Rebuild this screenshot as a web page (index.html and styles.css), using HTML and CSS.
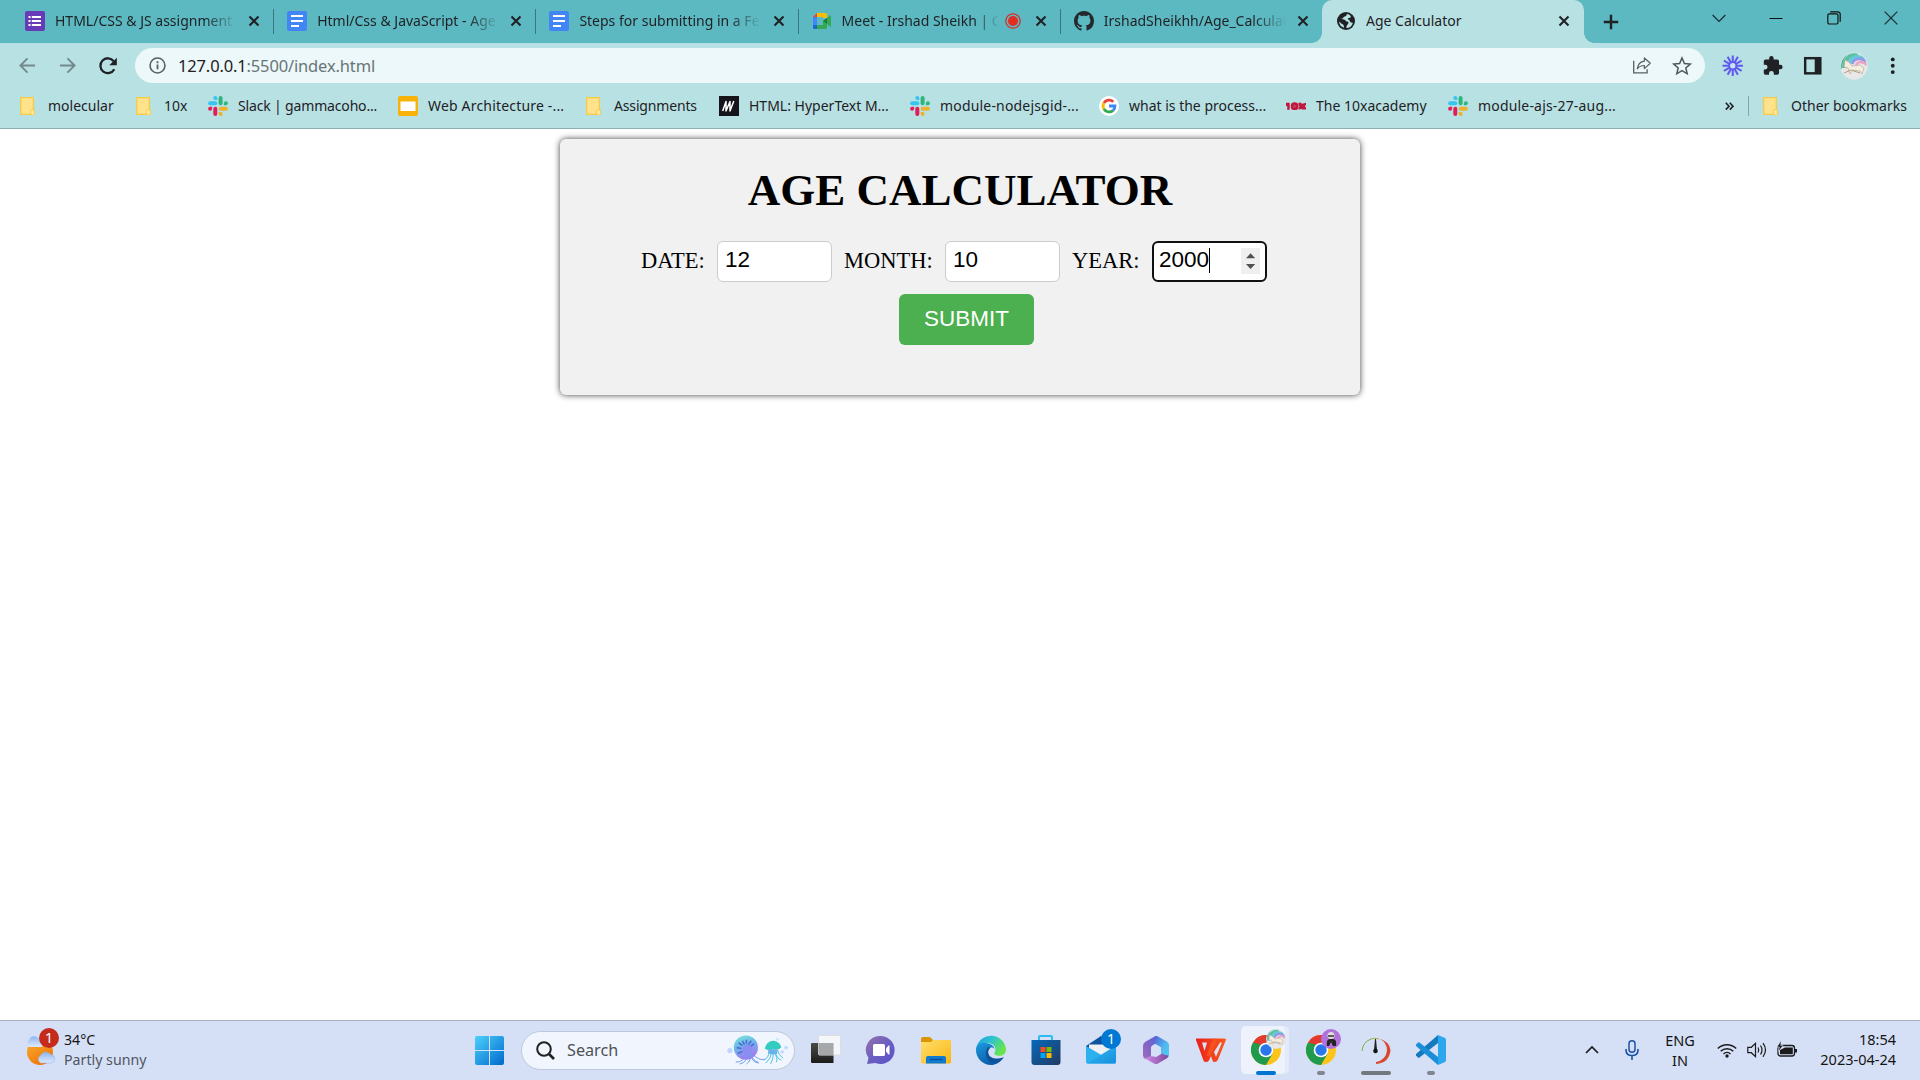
FILE: index.html
```html
<!DOCTYPE html>
<html lang="en">
<head>
<meta charset="utf-8">
<title>Age Calculator</title>
<link rel="stylesheet" href="styles.css">
</head>
<body>
<svg class="defs" width="0" height="0" aria-hidden="true">
  <defs>
    <linearGradient id="gWin" x1="0" y1="0" x2="1" y2="1"><stop offset="0" stop-color="#4cd0fb"/><stop offset="1" stop-color="#0069cc"/></linearGradient>
    <linearGradient id="gChat" x1="0" y1="0" x2="1" y2="1"><stop offset="0" stop-color="#9a71aa"/><stop offset=".5" stop-color="#6a60c0"/><stop offset="1" stop-color="#5a4fcb"/></linearGradient>
    <linearGradient id="gFolder" x1="0" y1="0" x2="1" y2="1"><stop offset="0" stop-color="#ffdf6c"/><stop offset="1" stop-color="#fbb612"/></linearGradient>
    <linearGradient id="gEdgeA" x1="0" y1="0" x2="1" y2=".5"><stop offset="0" stop-color="#1b9de2"/><stop offset=".5" stop-color="#2fc3cf"/><stop offset="1" stop-color="#66e64b"/></linearGradient>
    <linearGradient id="gEdgeB" x1="0" y1="0" x2=".6" y2="1"><stop offset="0" stop-color="#1b9ade"/><stop offset="1" stop-color="#0c59a4"/></linearGradient>
    <linearGradient id="gStore" x1="0" y1="0" x2="1" y2="1"><stop offset="0" stop-color="#0669b9"/><stop offset="1" stop-color="#233a63"/></linearGradient>
    <linearGradient id="gMail" x1="0" y1="0" x2="1" y2="1"><stop offset="0" stop-color="#38b8f2"/><stop offset="1" stop-color="#1590de"/></linearGradient>
    <linearGradient id="gJelly" x1="0" y1="0" x2=".4" y2="1"><stop offset="0" stop-color="#79ead0"/><stop offset=".5" stop-color="#6db6ec"/><stop offset="1" stop-color="#a779ef"/></linearGradient>
    <linearGradient id="gSun" x1="0" y1="0" x2=".6" y2="1"><stop offset="0" stop-color="#f8b22f"/><stop offset="1" stop-color="#f0750c"/></linearGradient>
    <linearGradient id="gCloud" x1="0" y1="0" x2="0" y2="1"><stop offset="0" stop-color="#8fb5ed"/><stop offset="1" stop-color="#dfeaff"/></linearGradient>
    <linearGradient id="gDark" x1="0" y1="0" x2="0" y2="1"><stop offset="0" stop-color="#4b4b49"/><stop offset="1" stop-color="#1b1b1a"/></linearGradient>
    <linearGradient id="gWps" x1="0" y1="0" x2="1" y2="0"><stop offset="0" stop-color="#e8201c"/><stop offset="1" stop-color="#fa5a1c"/></linearGradient>
    <linearGradient id="gM1" x1="0" y1="1" x2="1" y2="0"><stop offset="0" stop-color="#a06bb8"/><stop offset="1" stop-color="#5b5fd8"/></linearGradient>
    <linearGradient id="gM2" x1="0" y1="0" x2="1" y2="1"><stop offset="0" stop-color="#4f5fdb"/><stop offset=".6" stop-color="#52b9ee"/><stop offset="1" stop-color="#4bd0f0"/></linearGradient>
    <linearGradient id="gM3" x1="0" y1="0" x2="1" y2="0"><stop offset="0" stop-color="#d58bea"/><stop offset="1" stop-color="#7a4a9c"/></linearGradient>
    <symbol id="close" viewBox="0 0 12 12"><path d="M1.5 1.5l9 9M10.5 1.5l-9 9" stroke="#1f2124" stroke-width="2.1"/></symbol>
    <symbol id="folder" viewBox="0 0 20 20"><path d="M2.7 1.7h12.6v12.2h.3v4.4H2.700z" fill="#ffe38c" stroke="#f6cb45" stroke-width="1.300"/><path d="M13.500 18.300a1.800 1.800 0 0 1-1.200-1.700v-1.200a1.700 1.700 0 0 1 1.700-1.700h2.300v3a1.600 1.600 0 0 1-2.800 1.600z" fill="#ffe9a3" stroke="#f6cb45"/></symbol>
    <symbol id="docs" viewBox="0 0 20 20"><rect width="20" height="20" rx="2" fill="#4285f4"/><path d="M4 5h12M4 10h12M4 15h8" stroke="#fff" stroke-width="2.200"/></symbol>
    <symbol id="slack" viewBox="0 0 20 20">
      <g stroke-width="4" stroke-linecap="round"><path d="M2.100 7.300h5.200" stroke="#36c5f0"/><path d="M12.600 2.100v5.200" stroke="#2eb67d"/><path d="M12.700 12.700h5.200" stroke="#ecb22e"/><path d="M7.300 12.700v5.200" stroke="#e01e5a"/></g>
      <path d="M9.300 4.100H7.300a2 2 0 1 1 2-2z" fill="#36c5f0"/><path d="M15.900 9.300v-2a2 2 0 1 1 2 2z" fill="#2eb67d"/><path d="M10.700 15.900h2a2 2 0 1 1-2 2z" fill="#ecb22e"/><path d="M4.100 10.700v2a2 2 0 1 1-2-2z" fill="#e01e5a"/>
    </symbol>
    <symbol id="chrome" viewBox="0 0 30 30">
      <circle cx="15" cy="15" r="15" fill="#fcc418"/>
      <path d="M15 15L2 7.500A15 15 0 0 1 28 7.500H15z" fill="#e23a2e"/>
      <path d="M2 7.500A15 15 0 0 0 15 30l6.500-11.200L15 15 8.500 18.700z" fill="#209a4c"/>
      <path d="M2 7.500L8.500 18.700 15 15z" fill="#209a4c"/><path d="M2 7.500h26L15 15z" fill="#e23a2e"/><path d="M2 7.500l6.500 11.200 2-9z" fill="#209a4c"/>
      <circle cx="15" cy="15" r="7.300" fill="#fff"/><circle cx="15" cy="15" r="5.700" fill="#2878eb"/>
    </symbol>
    <clipPath id="round"><circle cx="14" cy="14" r="13.500"/></clipPath>
    <symbol id="pony" viewBox="0 0 28 28">
      <g clip-path="url(#round)"><rect width="28" height="28" fill="#e9e8e9"/>
        <path d="M2 17C2 6 8 1 13 0H0v17z" fill="#2ca183"/><path d="M4 16C4 7 11 1 18 2" fill="none" stroke="#59c2a1" stroke-width="4"/><path d="M8 14C9 6 17 2 25 7" fill="none" stroke="#66c9d9" stroke-width="3.500"/><path d="M12 12c2-6 9-7 15-2" fill="none" stroke="#8f9be4" stroke-width="3"/><path d="M16 13c2-4 7-4 11 0" fill="none" stroke="#eba3c0" stroke-width="2.500"/>
        <path d="M5 8l4 2 3 4 8-1 4 3-2 6-2-3-7-1-3 4-2-6-4-1z" fill="#f5eedf" stroke="#b7aa98" stroke-width=".7"/><path d="M4 21l7-3 9 3" fill="none" stroke="#b39c7c"/></g>
      <circle cx="14" cy="14" r="13.400" fill="none" stroke="#dce9e8"/>
    </symbol>
  </defs>
</svg>

<header class="browser">
  <div class="tabstrip">
    <div class="tab"><svg class="ico" viewBox="0 0 20 20"><rect width="20" height="20" rx="2" fill="#673ab7"/><path d="M6.800 6h9.200M6.800 10h9.200M6.800 14h9.200" stroke="#fff" stroke-width="2"/><path d="M3.500 6h2M3.500 10h2M3.500 14h2" stroke="#fff" stroke-width="2"/></svg><span class="tab-title fade">HTML/CSS &amp; JS assignment</span><svg class="x"><use href="#close"/></svg></div>
    <div class="tab"><svg class="ico"><use href="#docs"/></svg><span class="tab-title fade">Html/Css &amp; JavaScript - Age</span><svg class="x"><use href="#close"/></svg></div>
    <div class="tab"><svg class="ico"><use href="#docs"/></svg><span class="tab-title fade">Steps for submitting in a Fee</span><svg class="x"><use href="#close"/></svg></div>
    <div class="tab"><svg class="ico" viewBox="0 0 20 20"><path d="M1 6l4-4v4z" fill="#ea4335"/><path d="M5 2h8.500a1.500 1.500 0 0 1 1.500 1.500V7h-4V6H5z" fill="#fbbc04"/><path d="M1 6h4v8H1z" fill="#4285f4"/><path d="M1 14h4v4H2.500A1.500 1.500 0 0 1 1 16.500z" fill="#1967d2"/><path d="M5 14h6v-4l4-3 3-2.500q1-.5 1 .5v10q0 1-1 .5L15 13v3.500a1.500 1.500 0 0 1-1.500 1.500H5z" fill="#34a853"/><path d="M11 10l4-3v6z" fill="#188038"/></svg><span class="tab-title fade meet">Meet - Irshad Sheikh | C</span><svg class="rec" viewBox="0 0 16 16"><circle cx="8" cy="8" r="7.200" fill="none" stroke="#d93025" stroke-width="1.300"/><circle cx="8" cy="8" r="5" fill="#e32b20"/></svg><svg class="x"><use href="#close"/></svg></div>
    <div class="tab last"><svg class="ico" viewBox="0 0 16 16"><path fill="#24292e" d="M8 0C3.580 0 0 3.580 0 8c0 3.540 2.290 6.530 5.470 7.590.4.070.55-.17.55-.38 0-.19-.01-.82-.01-1.490-2.010.37-2.530-.49-2.690-.94-.09-.23-.48-.94-.82-1.130-.28-.15-.68-.52-.01-.53.63-.01 1.080.58 1.230.82.72 1.210 1.870.87 2.330.66.070-.52.28-.87.51-1.070-1.780-.2-3.640-.89-3.640-3.950 0-.87.31-1.590.82-2.150-.08-.2-.36-1.020.08-2.120 0 0 .67-.21 2.200.82.64-.18 1.320-.27 2-.27s1.360.09 2 .27c1.530-1.040 2.200-.82 2.200-.82.44 1.100.16 1.920.08 2.120.51.56.82 1.270.82 2.150 0 3.070-1.870 3.750-3.650 3.950.29.25.54.73.54 1.480 0 1.070-.01 1.930-.01 2.200 0 .21.15.46.55.38A8.010 8.010 0 0 0 16 8c0-4.420-3.580-8-8-8z"/></svg><span class="tab-title fade">IrshadSheikhh/Age_Calculat</span><svg class="x"><use href="#close"/></svg></div>
    <div class="tab active"><svg class="ico" viewBox="0 0 20 20"><circle cx="10" cy="10" r="9" fill="#202124"/><path d="M10.800 3c0 2-1.200 2.700-3 2.800-.4 1.700-1.700 2-3.500 2.200 1.900.3 3.600 0 4.700 1 .8.800 1 1.500 2.200 1.500 1.600.2 1.500 1.600.8 2.600-.8 1-1.500 1.600-1.700 3.900a7 7 0 0 0 6.600-5.300c-1.800.2-2.700-.2-3.100-1.600-.4-1.300-1.300-1.400-2.300-2 .5-1.400 1.900-1.300 3.200-1.700.2-1.200-.2-2-1-2.500A7 7 0 0 0 10.800 3zM3 10.500c.3 3 2 5.300 4.800 6.200.2-1.700 0-2.700-1.200-3.400C5 12.600 4.500 11.700 3 10.500z" fill="#b8e1e4"/></svg><span class="tab-title">Age Calculator</span><svg class="x"><use href="#close"/></svg></div>
    <svg class="plus" viewBox="0 0 16 16"><path d="M8 .8v14.400M.8 8h14.400" stroke="#1f2124" stroke-width="2.400"/></svg>
    <div class="winctl">
      <svg viewBox="0 0 14 14"><path d="M.6 4l6.400 6.400L13.400 4" fill="none" stroke="#1b2b2d" stroke-width="1.200"/></svg>
      <svg viewBox="0 0 14 14"><path d="M.5 7.500h13" stroke="#111"/></svg>
      <svg viewBox="0 0 14 14"><rect x=".8" y="2.800" width="10.200" height="10.200" rx="1.500" fill="none" stroke="#111" stroke-width="1.200"/><path d="M3.200.8h7.300a2.500 2.500 0 0 1 2.700 2.700v7.300" fill="none" stroke="#111" stroke-width="1.200"/></svg>
      <svg viewBox="0 0 14 14"><path d="M.7.700l12.600 12.600M13.300.700L.7 13.300" stroke="#1b2b2d" stroke-width="1.200"/></svg>
    </div>
  </div>

  <div class="toolbar">
    <svg class="nav" viewBox="0 0 18 18"><path d="M17 9H2M9 1.500L1.500 9 9 16.500" fill="none" stroke="#74898c" stroke-width="2"/></svg>
    <svg class="nav" viewBox="0 0 18 18"><path d="M1 9h15M9 1.500L16.500 9 9 16.500" fill="none" stroke="#74898c" stroke-width="2"/></svg>
    <svg class="nav" viewBox="0 0 18 18"><path d="M15.300 12.200A7.400 7.400 0 1 1 14.700 4.200" fill="none" stroke="#1f2124" stroke-width="2.300"/><path d="M17.800.8v7.500h-7.500z" fill="#1f2124"/></svg>
    <div class="omnibox">
      <svg class="info" viewBox="0 0 16 16"><circle cx="8" cy="8" r="7" fill="none" stroke="#5a6063" stroke-width="1.500"/><path d="M8 7v4.500M8 4v1.800" stroke="#5a6063" stroke-width="1.700"/></svg>
      <span class="url">127.0.0.1<span class="dim">:5500/index.html</span></span>
      <svg class="share" viewBox="0 0 20 18"><path d="M1.200 4v12.800h14.200V13" fill="none" stroke="#5a6063" stroke-width="1.400"/><path d="M12.500 1l6.300 5.700-6.300 5.600V9c-3.500 0-5.800 1.200-7.500 3.600C5.500 8.500 8 5 12.500 4.400z" fill="none" stroke="#5a6063" stroke-width="1.300" stroke-linejoin="round"/></svg>
      <svg class="star" viewBox="0 0 20 20"><path d="M10 2l2.400 5.500 5.900.5-4.500 3.900 1.400 5.900L10 14.700l-5.200 3.100 1.400-5.900L1.700 8l5.900-.5z" fill="none" stroke="#4f5659" stroke-width="1.500"/></svg>
    </div>
    <div class="ext">
      <svg viewBox="0 0 22 22"><g stroke="#6159ef" stroke-width="2.100"><path d="M11 .5v21M.5 11h21M5.750 1.900l10.500 18.200M1.900 5.750l18.200 10.500M1.900 16.250l18.200-10.500M5.750 20.100l10.500-18.200"/></g><circle cx="11" cy="11" r="4.600" fill="#6159ef"/><circle cx="11" cy="11" r="2.700" fill="#c5e7f4"/></svg>
      <svg viewBox="0 0 24 24"><path d="M20.500 11H19V7a2 2 0 0 0-2-2h-4V3.500a2.500 2.500 0 0 0-5 0V5H4a2 2 0 0 0-2 2v3.800h1.500a2.700 2.700 0 0 1 0 5.400H2V20a2 2 0 0 0 2 2h3.800v-1.500a2.700 2.700 0 0 1 5.400 0V22H17a2 2 0 0 0 2-2v-4h1.500a2.500 2.500 0 0 0 0-5z" fill="#1f2124"/></svg>
      <svg viewBox="0 0 22 22"><path d="M2 2h18v18H2z" fill="#1f2124"/><path d="M4.500 4.500h8.500v13H4.500z" fill="#b8e1e4"/></svg>
      <svg class="avatar"><use href="#pony"/></svg>
      <svg class="dots" viewBox="0 0 22 22"><circle cx="11" cy="4.500" r="2" fill="#1f2124"/><circle cx="11" cy="11" r="2" fill="#1f2124"/><circle cx="11" cy="17.500" r="2" fill="#1f2124"/></svg>
    </div>
  </div>

  <nav class="bookmarks">
    <a><svg class="ico"><use href="#folder"/></svg>molecular</a>
    <a><svg class="ico"><use href="#folder"/></svg>10x</a>
    <a class="tight"><svg class="ico"><use href="#slack"/></svg>Slack | gammacoho...</a>
    <a class="loose"><svg class="ico" viewBox="0 0 20 20"><rect width="20" height="20" rx="2" fill="#f7b30a"/><rect x="2.500" y="5.500" width="15" height="9.500" fill="#fff"/></svg>Web Architecture -...</a>
    <a class="tight"><svg class="ico"><use href="#folder"/></svg>Assignments</a>
    <a><svg class="ico" viewBox="0 0 20 20"><path d="M0 0h20v20H0z" fill="#15141a"/><path d="M3.700 15L7 5.500V15L11 5.500V15L14.800 5" fill="none" stroke="#fff" stroke-width="1.500" stroke-linejoin="round"/></svg>HTML: HyperText M...</a>
    <a class="loose"><svg class="ico"><use href="#slack"/></svg>module-nodejsgid-...</a>
    <a><svg class="ico" viewBox="0 0 20 20"><circle cx="10" cy="10" r="10" fill="#fff"/><g fill="none" stroke-width="2.800"><path d="M4.900 7A6 6 0 0 1 14.300 5.800" stroke="#ea4335"/><path d="M4.900 13a6 6 0 0 1 0-6" stroke="#fbbc05"/><path d="M14.100 14.400A6 6 0 0 1 4.900 13" stroke="#34a853"/><path d="M10 10h6a6 6 0 0 1-1.900 4.400" stroke="#4285f4"/></g></svg>what is the process...</a>
    <a><svg class="ico" viewBox="0 0 20 20"><path d="M0 6.800h3.700v7H1.200V10H0zM14 6.500l2.400 1.200 3.600-1V9l-1.300 1.200L20 11.500v2h-3.500L14.500 13l-2 .7v-2.200l1-1.300-1-1.200V6.800z" fill="#c1173c"/><circle cx="8.600" cy="10.200" r="2.700" stroke="#c1173c" stroke-width="2.400" fill="#b8485d"/></svg>The 10xacademy</a>
    <a class="loose"><svg class="ico"><use href="#slack"/></svg>module-ajs-27-aug...</a>
    <span class="more"><svg width="9" height="9" viewBox="0 0 9 9"><path d="M.8.800L4 4.200.8 7.600M4.800.800L8 4.200 4.800 7.600" fill="none" stroke="#1f2124" stroke-width="1.600"/></svg></span>
    <a class="other"><svg class="ico"><use href="#folder"/></svg>Other bookmarks</a>
  </nav>
</header>

<main class="page">
  <section class="card">
    <h1>AGE CALCULATOR</h1>
    <form class="fields">
      <label for="d" class="l-date">DATE:</label><input id="d" value="12">
      <label for="m" class="l-month">MONTH:</label><input id="m" value="10">
      <label class="l-year">YEAR:</label>
      <div class="year"><span class="typed">2000</span><svg class="spin" viewBox="0 0 19 26"><path d="M0 0h19v26H0z" fill="#efefef"/><path d="M5 10.300l4.600-5 4.600 5zM5 16l4.600 5 4.600-5z" fill="#505050"/></svg></div>
    </form>
    <button type="button">SUBMIT</button>
  </section>
</main>

<footer class="taskbar">
  <div class="weather">
    <svg width="36" height="38" viewBox="0 0 36 38"><circle cx="15" cy="20" r="13" fill="url(#gSun)"/><path d="M4 15a4 4 0 0 1 0-7 5.500 5.500 0 0 1 10-1q6 2 3 8z" fill="url(#gCloud)"/><path d="M15.500 31a4.300 4.300 0 0 1 0-7.500 6 6 0 0 1 10-1q5 1 4 5-1 3.500-4 3.500z" fill="url(#gCloud)" stroke="#8fb5ed" stroke-width=".6"/></svg>
    <span class="badge red">1</span>
    <div class="wtext"><b>34°C</b><span>Partly sunny</span></div>
  </div>
  <svg class="start" viewBox="0 0 29 29"><path d="M2 0h12v14H0V2a2 2 0 0 1 2-2zM15 0h12a2 2 0 0 1 2 2v12H15zM0 15h14v14H2a2 2 0 0 1-2-2zM15 15h14v12a2 2 0 0 1-2 2H15z" fill="url(#gWin)"/></svg>
  <div class="search">
    <svg width="19" height="19" viewBox="0 0 19 19"><circle cx="8" cy="8" r="6.800" fill="none" stroke="#222" stroke-width="2"/><path d="M13 13l5 5" stroke="#222" stroke-width="2.600"/></svg>
    <span>Search</span>
    <svg class="jelly" viewBox="0 0 64 32">
      <circle cx="3" cy="16" r="2.700" fill="#bfd5fb"/><circle cx="57" cy="17.500" r="1.700" fill="#bfd5fb"/><circle cx="61" cy="13" r="2" fill="#c3dcfb"/><circle cx="52" cy="4.500" r="1.500" fill="#c3ecf8"/>
      <circle cx="19.500" cy="13" r="12.500" fill="url(#gJelly)"/>
      <g stroke="#4f6cd6" stroke-width="1.700"><path d="M20 9V5M22 10l3-4M18 10l-2-4M16 11l-4-3M24 12l4-3M15 14l-5-1M16 17l-5 2"/></g><path d="M16 15a5 5 0 0 1 10 0q-1 6-5 5t-5-5z" fill="#8c8df0"/>
      <path d="M18 20q0 8-9 8M21 20q0 8-8 10M23 20q3 6-3 10M24 19q3 8 8 9M26 19q7 8 13 6M25 20q0 8 8 9" fill="none" stroke="#6e9bee" stroke-width="1"/>
      <path d="M39 14q2-8 9-8 7 1 8 7-3 3-8 2-6 2-9-1z" fill="#33cdbf"/><path d="M43 15h9v4q-5 2-9 0z" fill="#79a9f0"/>
      <path d="M43 16q1 7-5 10M46 17q0 7-6 12M48 17q0 8-3 13M50 17q1 7 6 9M52 15q1 6 6 9M48 17q5 7 3 11" fill="none" stroke="#50bfe2"/>
    </svg>
  </div>
  <div class="apps">
    <span><svg viewBox="0 0 30 30"><path d="M0 9q0-1 1-1h21.500v20H1q-1 0-1-1z" fill="url(#gDark)"/><rect x="7.500" y=".5" width="22" height="19.500" rx="1" fill="#fafafa" fill-opacity=".82" stroke="#ddd"/><path d="M7.500 8H22.500v12h-15z" fill="#999c9d" opacity=".8"/></svg></span>
    <span><svg viewBox="0 0 30 30"><path d="M15.500 1a14 14 0 1 1-6 27l-8.500 1 1.500-6A14 14 0 0 1 15.500 1z" fill="url(#gChat)"/><rect x="7" y="9" width="12" height="12" rx="1.500" fill="#fff"/><path d="M20 13.500l2.500-3h1v9h-1l-2.500-3z" fill="#fff"/></svg></span>
    <span><svg viewBox="0 0 30 30"><path d="M0 4q0-2 2-2h7l3.500 3.500L10 10H0z" fill="#d99602"/><path d="M0 7h10l2-2h18v22a1.500 1.500 0 0 1-1.500 1.500h-27A1.500 1.500 0 0 1 0 27z" fill="url(#gFolder)"/><path d="M5 28.500V23q0-2 2-2h16q2 0 2 2v5.500z" fill="#0f7ad0"/><path d="M9 24.500h12.500" stroke="#0b4f94" stroke-width="1.300"/></svg></span>
    <span><svg viewBox="0 0 30 30"><path d="M.5 12A15 15 0 0 1 30 14.500C30 20 25 21.500 21 20.500c-3-.8-3-2-2-3.500C21 12 17 8 11 8 6 8 2 9.500.5 12z" fill="url(#gEdgeA)"/><path d="M0 14C.5 9 5 7 9.500 8 15 8.500 18 11 18.500 14c-3-3.500-7.500 0-6.500 4.500C13 23 19 26 27.500 22.500 24 28 19.500 30 15 30A15 15 0 0 1 0 14z" fill="url(#gEdgeB)"/><path d="M12.500 11.500C9 15 9 22 13 26c4 3.500 10 2 15-4-7 3-14 1.500-15.500-3-.8-2.500 0-4.500 1.500-6z" fill="#0d529c"/></svg></span>
    <span><svg viewBox="0 0 30 30"><path d="M8 6V2q0-1 1-1h11q1 0 1 1v4" fill="none" stroke="#2dbdf2" stroke-width="2"/><path d="M.5 5h29v22a3 3 0 0 1-3 3h-23a3 3 0 0 1-3-3z" fill="url(#gStore)"/><path d="M9.500 12H14.500v5h-5z" fill="#f25022"/><path d="M15.500 12h5v5h-5z" fill="#7fba00"/><path d="M9.500 18h5v5h-5z" fill="#00a4ef"/><path d="M15.500 18h5v5h-5z" fill="#ffb900"/></svg></span>
    <span><svg viewBox="0 0 30 30"><path d="M0 11L15 1l15 10v6H0z" fill="#0d549e"/><path d="M3 9.500h24V16l-12 8L3 14z" fill="#eef0f4"/><path d="M0 11l30 17.500H1.500A1.500 1.500 0 0 1 0 27z" fill="#2cb1ef"/><path d="M30 10.500v16.500a1.500 1.500 0 0 1-1.500 1.500H1z" fill="url(#gMail)"/></svg><i class="badge blue">1</i></span>
    <span><svg viewBox="0 0 30 30"><path d="M14 1.200L4 7Q2 8.500 2 11v9.500q0 2.500 2.500 3.500L10 21V13q0-2 2-3l5.500-3V3Q16 .5 14 1.200z" fill="url(#gM1)"/><path d="M14 1.200q1.500-.4 3 .4l9.500 5.400Q28 8 28 10.500v9q0 2-1.500 3L20 18.500v-6L12.500 8q4-3 1.500-6.800z" fill="url(#gM2)"/><path d="M3 22.500q4 1 7-1.500l5 1 6-3.500q3 2 6.500 2 .3 1.500-2 3L17 28.500q-2 1-4 0L5 24z" fill="url(#gM3)"/><path d="M10.500 12l5-2.500 4.500 3v6L15 21.500 10.500 19z" fill="#d5dff6"/></svg></span>
    <span><svg viewBox="0 0 30 30"><path d="M0 3.500h28.500q2 0 1.200 2L22 24.500q-1 2.500-3.500 2.500-1.500 0-2-1.500L15 21l-1.500 3.500Q12.500 27 10 27q-2 0-2.500-1.500L0 5z" fill="url(#gWps)"/><path d="M6 7.500h5L8.500 16zM16 7.500h3.500l-5 11-1-3zM24 7.500h2L20 22l-2-5z" fill="#dbe2f6"/><path d="M12.500 21L19.500 4" stroke="#f7511d" stroke-width="4"/></svg></span>
    <span class="on"><svg><use href="#chrome"/></svg><svg class="mini"><use href="#pony"/></svg><i class="bar active"></i></span>
    <span><svg><use href="#chrome"/></svg><svg class="mini" viewBox="0 0 20 20"><circle cx="10" cy="10" r="10" fill="#b071db"/><path d="M6 17q-1-7 3-7h3q4 0 3 7h-3l-2-4-2 4z" fill="#222"/><circle cx="10" cy="6.500" r="3.500" fill="#ddd"/><path d="M7 7h6M8 13h4" stroke="#333" stroke-width="1.500"/></svg><i class="bar"></i></span>
    <span><svg viewBox="0 0 30 30"><path d="M1 16A14 14 0 0 1 10 4" fill="none" stroke="#78b63a"/><path d="M10 4q4-1.500 8 0" fill="none" stroke="#a7b341"/><path d="M18 3.500q11 3 11.500 12Q28 28 15 29v-2q10-2 11-11.500Q26 7 18 3.500z" fill="#d9472f"/><path d="M14 4h1l1 11h-3z" fill="#222"/><circle cx="14.500" cy="16" r="2.300" fill="#111"/></svg><i class="bar wide"></i></span>
    <span><svg viewBox="0 0 30 30"><path d="M22 0l7 3q1 .5 1 2v20q0 1.500-1 2l-7 3z" fill="#2ca7ed"/><path d="M22 0v8L3.500 22.500Q2.500 23 2 22.500l-2-2V19z" fill="#1479bd"/><path d="M22 30v-8L3.500 7.500Q2.500 7 2 7.500l-2 2V11z" fill="#1b8ed8"/></svg><i class="bar"></i></span>
  </div>
  <div class="tray">
    <svg class="up" viewBox="0 0 14 8"><path d="M1 7l6-6 6 6" fill="none" stroke="#1b1b1b" stroke-width="1.700"/></svg>
    <svg class="mic" viewBox="0 0 14 20"><rect x="4" y=".8" width="6" height="11.500" rx="3" fill="none" stroke="#1b51a5" stroke-width="1.500"/><path d="M1 9v1q0 5.500 6 5.500T13 10V9M7 15.500V20" fill="none" stroke="#1b51a5" stroke-width="1.600"/></svg>
    <div class="lang">ENG<br>IN</div>
    <svg class="sys" viewBox="0 0 20 16"><g fill="none" stroke="#1b1b1b" stroke-width="1.400"><path d="M.8 6.500a13 13 0 0 1 18.400 0M3.700 9.300a9 9 0 0 1 12.600 0M6.500 12a5 5 0 0 1 7 0"/></g><circle cx="10" cy="14" r="1.700" fill="#1b1b1b"/></svg>
    <svg class="sys" viewBox="0 0 20 16"><g fill="none" stroke="#1b1b1b" stroke-width="1.200"><path d="M.8 5.300h3.500L8.500 1.300v13.400L4.300 10.700H.8z"/><path d="M11 5.500q1.600 2.500 0 5M13.500 3.500q3 4.500 0 9M16 1.200q5 6.800 0 13.600"/></g></svg>
    <svg class="sys" viewBox="0 0 20 16"><rect x="1" y="3.500" width="16.500" height="10.500" rx="2.500" fill="none" stroke="#1b1b1b" stroke-width="1.300"/><path d="M3 12.200V8l5-2.500h7.800v6.700zM18 7h2v3.500h-2z" fill="#1b1b1b"/><path d="M4-1.500L0 5h2.300L1.500 9.500 6 3.500H3.800z" fill="#1b1b1b" stroke="#d5e0f7" stroke-width=".6"/></svg>
    <div class="clock">18:54<br>2023-04-24</div>
  </div>
</footer>
</body>
</html>
```
FILE: styles.css
```css
* { box-sizing: border-box; }
body {
  margin: 0;
  width: 1920px;
  height: 1080px;
  overflow: hidden;
  display: flex;
  flex-direction: column;
  background: #fff;
  color: #1f2124;
  font: 14px/20px "Noto Sans", sans-serif;
}
.defs { position: absolute; }
svg { display: block; flex: none; overflow: visible; }
.ico { width: 20px; height: 20px; }

/* Browser chrome */
.browser { height: 129px; background: #b8e1e4; border-bottom: 1px solid #8fb0b3; }
.tabstrip { display: flex; align-items: center; height: 43px; padding-left: 11px; background: #5cb8c1; }
.tab { position: relative; display: flex; align-items: center; width: 262.200px; height: 43px; padding: 0 13px 1px 14px; }
.tab:not(.last):not(.active)::after { content: ""; position: absolute; right: -1px; top: 9px; width: 1px; height: 25px; background: #3c777d; }
.tab-title { width: 182px; margin-left: 10px; overflow: hidden; white-space: nowrap; }
.fade { -webkit-mask-image: linear-gradient(90deg, #000 150px, transparent 182px); mask-image: linear-gradient(90deg, #000 150px, transparent 182px); }
.fade.meet { width: 157px; -webkit-mask-image: linear-gradient(90deg, #000 133px, transparent 157px); mask-image: linear-gradient(90deg, #000 133px, transparent 157px); }
.tab .x { width: 12px; height: 12px; margin-left: auto; }
.tab .rec { width: 16px; height: 16px; margin-left: 6px; }
.tab.active { width: 262px; background: #b8e1e4; border-radius: 10px 10px 0 0; padding-right: 14px; }
.tab.active::before, .tab.active::after { content: ""; position: absolute; bottom: 0; width: 10px; height: 10px; }
.tab.active::before { left: -10px; background: radial-gradient(circle at 0 0, #5cb8c1 9.500px, #b8e1e4 10px); }
.tab.active::after { right: -10px; background: radial-gradient(circle at 100% 0, #5cb8c1 9.500px, #b8e1e4 10px); }
.plus { width: 16px; height: 16px; margin-left: 19px; }
.winctl { display: flex; gap: 43.300px; margin: -7px 22px 0 auto; }
.winctl svg { width: 14px; height: 14px; }

.toolbar { display: flex; align-items: center; height: 45px; padding-left: 19px; }
.nav { width: 17px; height: 17px; margin-right: 23px; }
.nav:nth-child(3) { width: 18px; height: 18px; margin-right: 18px; }
.omnibox { display: flex; align-items: center; width: 1570px; height: 35px; padding: 0 13px 0 14px; border-radius: 18px; background: #ecf8f9; }
.info { width: 17px; height: 17px; margin-right: 12px; }
.url { flex: 1; font-size: 16.500px; letter-spacing: -.15px; }
.dim { color: #697477; }
.share { width: 20px; height: 17px; margin-right: 20px; }
.star { width: 20px; height: 20px; }
.ext { display: flex; align-items: center; gap: 18.500px; margin-left: 17px; }
.ext svg { width: 21.500px; height: 21.500px; }
.ext .avatar { width: 28px; height: 28px; margin-left: -2px; margin-right: -5px; }

.bookmarks { display: grid; grid-template-columns: 116px 74px 190px 186px 135px 191px 189px 187px 162px 277px 23px 160px; align-items: center; height: 36px; padding-left: 18px; white-space: nowrap; }
.bookmarks a { display: flex; align-items: center; gap: 10px; }
.tight { letter-spacing: -.16px; }
.loose { letter-spacing: .18px; }
.other { border-left: 1px solid #87a5a8; padding-left: 12px; }

/* Page content */
.page { flex: 1; padding-top: 10px; }
.card { display: flex; flex-direction: column; align-items: center; width: 800px; height: 256px; margin: 0 auto; padding-top: 25px; background: #f1f1f1; border-radius: 6px; box-shadow: 0 0 6px rgba(0, 0, 0, .75); color: #000; }
h1 { margin: 0; font: bold 45px/52px "Liberation Serif", serif; }
.fields { display: flex; width: 638px; margin: 25px 0 12px; font: 22.500px/39px "Liberation Serif", serif; }
.l-date { width: 76px; }
.l-month { width: 113px; padding-left: 12px; }
.l-year { width: 92px; padding-left: 12px; }
.l-month, .l-year { white-space: nowrap; }
.fields input, .year { width: 115px; height: 41px; margin: 0; padding: 0 0 3px 7px; background: #fff; border: 1px solid #ccc; border-radius: 6px; font: 22.500px/34px "Liberation Sans", sans-serif; }
.year { display: flex; padding: 5px 5px 0; border: 2px solid #101010; }
.typed { height: 25px; line-height: 24px; border-right: 1px solid #000; }
.spin { width: 19px; height: 26px; margin-left: auto; }
button { width: 135px; height: 51px; margin-left: 13px; padding: 0 0 2px; border: 0; border-radius: 6px; background: #4caf50; color: #fff; font: 22.500px "Liberation Sans", sans-serif; }

/* Taskbar */
.taskbar { display: flex; align-items: center; height: 60px; border-top: 1px solid #a9afbd; background: #d5e0f7; color: #151515; }
.weather { position: relative; display: flex; width: 475px; padding-left: 25px; }
.wtext { display: flex; flex-direction: column; margin: -2px 0 0 3px; font-size: 14.200px; }
.wtext b { font-weight: 400; }
.wtext span { color: #50555f; }
.badge { position: absolute; width: 20px; height: 20px; border-radius: 50%; color: #fff; font: 14px/20px "Noto Sans", sans-serif; text-align: center; }
.red { left: 39px; top: -4px; background: #c42b1c; }
.blue { right: 7px; top: 8px; background: #0078d4; z-index: 2; }
.start { width: 29px; height: 29px; margin-top: -1px; }
.search { display: flex; align-items: center; width: 274px; height: 39px; margin: -1px 0 0 17px; padding: 0 5px 0 14px; border: 1px solid #bdc7dc; border-radius: 20px; background: #f1f5fd; color: #4e5258; font-size: 16.200px; }
.search span { margin-left: 12px; }
.jelly { width: 62px; height: 31px; margin-left: auto; }
.apps { display: flex; margin-left: 3px; }
.apps span { position: relative; display: flex; align-items: center; justify-content: center; width: 55px; height: 59px; padding-bottom: 1px; }
.apps svg { width: 30px; height: 30px; z-index: 1; }
.apps .mini { position: absolute; right: 7px; top: 8px; width: 20px; height: 20px; }
.on::before { content: ""; position: absolute; left: 3px; top: 5px; width: 44px; height: 48px; border-radius: 5px; background: #eef2fc; box-shadow: 4px 0 0 #e4eaf9; }
.bar { position: absolute; bottom: 5px; width: 8px; height: 4px; border-radius: 2px; background: #808590; z-index: 1; }
.bar.active { width: 20px; background: #0075d2; }
.bar.wide { width: 30px; background: #737780; }
.tray { display: flex; align-items: center; flex: 1; margin: -2px 0 0 127px; font-size: 14.500px; }
.up { width: 14px; height: 8px; }
.mic { width: 14px; height: 20px; margin-left: 26px; }
.lang { width: 50px; margin-left: 16px; text-align: center; }
.sys { width: 20px; height: 16px; margin-left: 10px; }
.lang + .sys { margin-left: 12px; }
.clock { flex: 1; margin-top: -2px; padding-right: 24px; text-align: right; }
```
